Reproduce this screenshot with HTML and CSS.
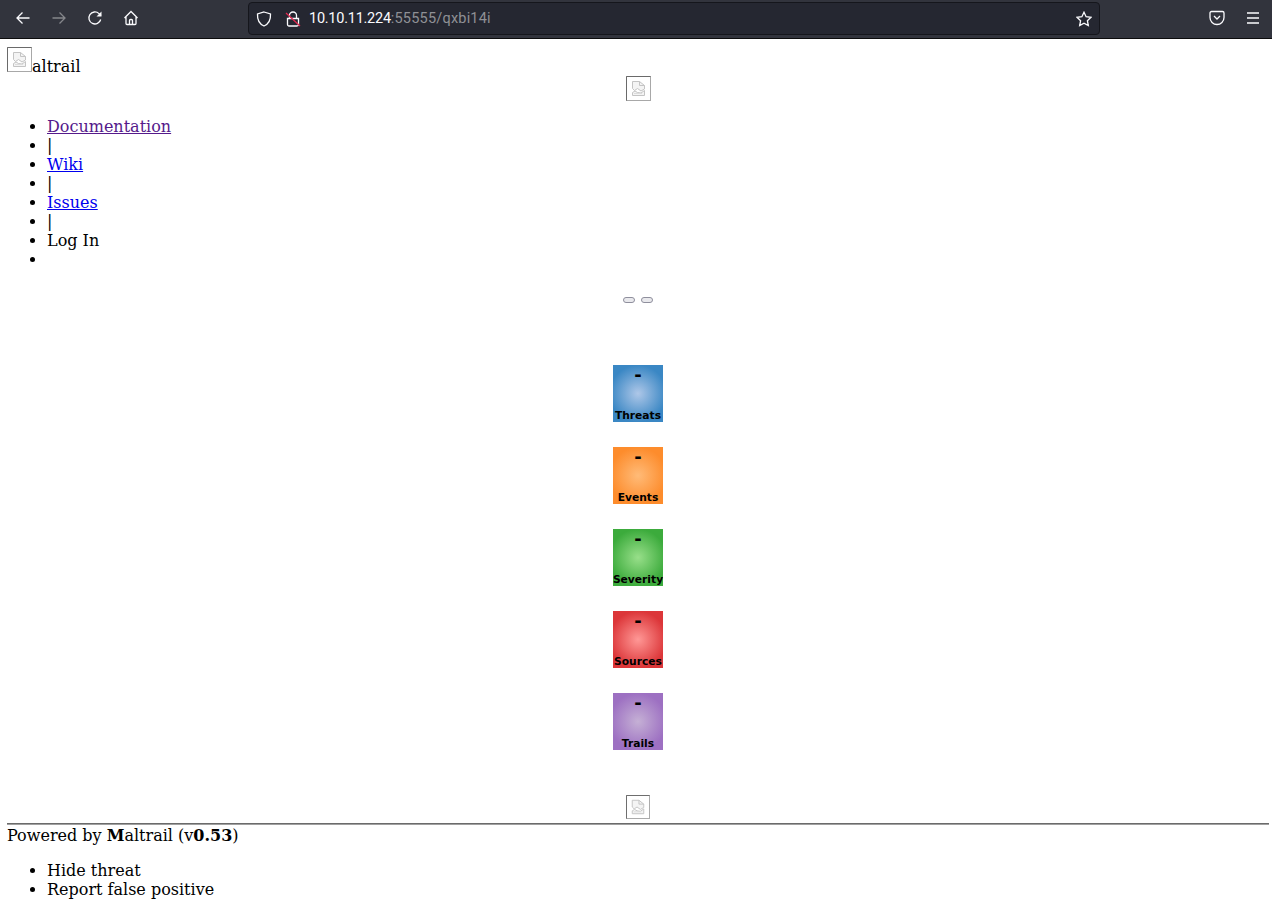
FILE: index.html
```html
<!DOCTYPE html>
<html lang="en">
<head>
<meta charset="utf-8">
<title>Maltrail</title>
<link rel="stylesheet" href="styles.css">
</head>
<body>
<svg class="defs" width="0" height="0" aria-hidden="true">
  <symbol id="broken" viewBox="0 0 25 25">
    <rect x="0.5" y="0.5" width="24" height="24" fill="#fff" stroke="#a8a8a8"/>
    <path d="M0.5 24.500V0.500H24.500" fill="none" stroke="#6a6a6a"/>
    <path d="M6.500 12.500V5.500H13.500L18.500 9.500V13L15 15L11.500 12.500L8.500 14.500Z" fill="#f4f4f4" stroke="#c4c4c4"/>
    <path d="M13.500 5.500V9.500H18.500" fill="none" stroke="#c4c4c4"/>
    <path d="M6.500 16.500L9 15L11.500 16.500L15 17L18.500 14.500V19.500H6.500Z" fill="#f4f4f4" stroke="#c4c4c4"/>
    <path d="M8 17.500H16" fill="none" stroke="#dcdcdc"/>
  </symbol>
</svg>
<header class="toolbar">
  <div class="nav-group">
    <svg class="tool" viewBox="0 0 16 16"><path d="M14.500 8H2M7.500 2.500L2 8l5.500 5.500"/></svg>
    <svg class="tool dim" viewBox="0 0 16 16"><path d="M1.500 8H14M8.500 2.500L14 8l-5.500 5.500"/></svg>
    <svg class="tool" viewBox="0 0 16 16"><path d="M13.700 9.500A6 6 0 1 1 12 3.600L14 5.500"/><path class="solid" d="M14.500 1.500v5h-5z"/></svg>
    <svg class="tool" viewBox="0 0 16 16"><path d="M1.500 8L8 1.500 14.500 8M3 7v6.500a1 1 0 0 0 1 1h8a1 1 0 0 0 1-1V7M6.500 14.500V10.500a1 1 0 0 1 1-1h1a1 1 0 0 1 1 1v4"/></svg>
  </div>
  <div class="urlbar">
    <svg class="tool shield" viewBox="0 0 16 16"><path d="M8 1L14.500 3C14.800 8.500 13 12.800 8 15C3 12.800 1.200 8.500 1.500 3Z"/></svg>
    <svg class="tool lock" viewBox="0 0 16 16"><path d="M4.500 7.500V4.500a3.500 3.500 0 0 1 7 0V7.500M2.500 7.500h11v6a1.500 1.500 0 0 1-1.500 1.500H4a1.500 1.500 0 0 1-1.500-1.500z"/><path class="slash" d="M1 2L15 15"/></svg>
    <span class="url"><span class="host">10.10.11.224</span><span class="rest">:55555/qxbi14i</span></span>
    <svg class="tool star" viewBox="0 0 16 16"><path d="M8 1.200l2.100 4.500 4.900.6-3.600 3.400.9 4.900L8 12.200l-4.300 2.400.9-4.900L1 6.300l4.900-.6z"/></svg>
  </div>
  <div class="end-group">
    <svg class="tool" viewBox="0 0 16 16"><path d="M2.500 1.500h11a1.500 1.500 0 0 1 1.500 1.500v4.500a7 7 0 0 1-14 0V3a1.500 1.500 0 0 1 1.500-1.500z"/><path d="M5 6l3 3 3-3"/></svg>
    <svg class="tool" viewBox="0 0 16 16"><path d="M2 3h12M2 8h12M2 13h12"/></svg>
  </div>
</header>
<main class="page">
  <div class="brand"><svg class="broken"><use href="#broken"/></svg>altrail</div>
  <div class="center center-logo"><svg class="broken"><use href="#broken"/></svg></div>
  <ul class="list menu">
    <li><a class="visited" href="#doc">Documentation</a></li>
    <li>|</li>
    <li><a href="#wiki">Wiki</a></li>
    <li>|</li>
    <li><a href="#issues">Issues</a></li>
    <li>|</li>
    <li>Log In</li>
    <li></li>
  </ul>
  <div class="period-buttons"><button class="pill" type="button"></button><button class="pill" type="button"></button></div>
  <section class="counters">
    <div class="counter threats"><span class="value">-</span><span class="label">Threats</span></div>
    <div class="counter events"><span class="value">-</span><span class="label">Events</span></div>
    <div class="counter severity"><span class="value">-</span><span class="label">Severity</span></div>
    <div class="counter sources"><span class="value">-</span><span class="label">Sources</span></div>
    <div class="counter trails"><span class="value">-</span><span class="label">Trails</span></div>
  </section>
  <div class="center footer-logo"><svg class="broken small"><use href="#broken"/></svg></div>
  <hr class="rule">
  <div class="powered">Powered by <b>M</b>altrail (v<b>0.53</b>)</div>
  <ul class="list context">
    <li>Hide threat</li>
    <li>Report false positive</li>
  </ul>
</main>
</body>
</html>
```
FILE: styles.css
```css
html, body {
  margin: 0;
  padding: 0;
  background: #fff;
}
body {
  font-family: "DejaVu Serif", serif;
  font-size: 16px;
  line-height: 19px;
  color: #000;
  overflow: hidden;
}
.defs {
  position: absolute;
}
.toolbar {
  box-sizing: border-box;
  height: 39px;
  background: #32343d;
  border-bottom: 1px solid #0c0c0d;
  display: flex;
  align-items: center;
  padding-bottom: 1px;
}
.nav-group {
  display: flex;
  gap: 20px;
  padding-left: 15px;
  width: 233px;
  box-sizing: border-box;
  margin-top: -1px;
}
.tool {
  width: 16px;
  height: 16px;
  fill: none;
  stroke: #fbfbfe;
  stroke-width: 1.3;
  flex: none;
}
.tool.dim {
  stroke: #85868b;
}
.tool .solid {
  fill: #fbfbfe;
  stroke: none;
}
.tool .slash {
  stroke: #e22850;
}
.urlbar {
  box-sizing: border-box;
  width: 852px;
  height: 33px;
  margin-left: 15px;
  background: #252731;
  border: 1px solid #15161c;
  border-radius: 4px;
  display: flex;
  align-items: center;
  padding: 0 7px 0 7px;
  font-family: Roboto, sans-serif;
  font-size: 14.5px;
  color: #8f9095;
}
.shield {
  margin-right: 13px;
}
.lock {
  margin-right: 8px;
}
.host {
  color: #fbfbfe;
  letter-spacing: -0.25px;
}
.rest {
  letter-spacing: 0.2px;
}
.url {
  flex: 1;
}
.end-group {
  display: flex;
  gap: 20px;
  margin-left: 109px;
  margin-top: -1px;
}
.page {
  padding: 8px 3px 0 7px;
}
.broken {
  display: inline-block;
  width: 25px;
  height: 25px;
}
.broken.small {
  width: 24px;
  height: 24px;
}
.brand {
  height: 29px;
}
.center {
  text-align: center;
}
.center-logo {
  height: 25px;
}
.center .broken {
  display: block;
  margin: 0 auto;
}
.list {
  margin: 0;
  padding-left: 40px;
}
.menu {
  margin-top: 16px;
  height: 152px;
}
.visited {
  color: #551a8b;
}
a {
  color: #0000ee;
}
.period-buttons {
  display: flex;
  justify-content: center;
  gap: 6px;
  margin-top: 28px;
  padding-right: 1px;
}
.pill {
  box-sizing: border-box;
  width: 12px;
  height: 6px;
  padding: 0;
  border: 1px solid #8f8f9d;
  border-radius: 3px;
  background: #e9e9ed;
}
.counters {
  display: flex;
  flex-direction: column;
  align-items: center;
  gap: 25px;
  margin-top: 62px;
}
.counter {
  width: 50px;
  height: 57px;
  display: flex;
  flex-direction: column;
  align-items: center;
  justify-content: space-between;
  font-family: "DejaVu Sans", sans-serif;
  font-weight: 700;
  color: #000;
  overflow: hidden;
  white-space: nowrap;
}
.value {
  font-size: 18px;
  line-height: 20px;
}
.label {
  font-size: 10.7px;
  line-height: 12px;
}
.threats {
  background: radial-gradient(circle at center, #aec7e8, #3a87c4 75%);
}
.events {
  background: radial-gradient(circle at center, #ffbb78, #fd8c2c 75%);
}
.severity {
  background: radial-gradient(circle at center, #98df8a, #3cab3c 75%);
}
.sources {
  background: radial-gradient(circle at center, #ff9896, #dc3639 75%);
}
.trails {
  background: radial-gradient(circle at center, #c5b0d5, #9d70c2 75%);
}
.footer-logo {
  margin-top: 45px;
  height: 24px;
  padding-right: 1px;
}
.rule {
  margin: 4px 0 0;
  border: 0;
  border-top: 1px solid #6b6b6b;
  border-bottom: 1px solid #a0a0a0;
  height: 0;
}
.powered {
  height: 19px;
  margin-top: 1px;
}
.context {
  margin-top: 16px;
}
```
